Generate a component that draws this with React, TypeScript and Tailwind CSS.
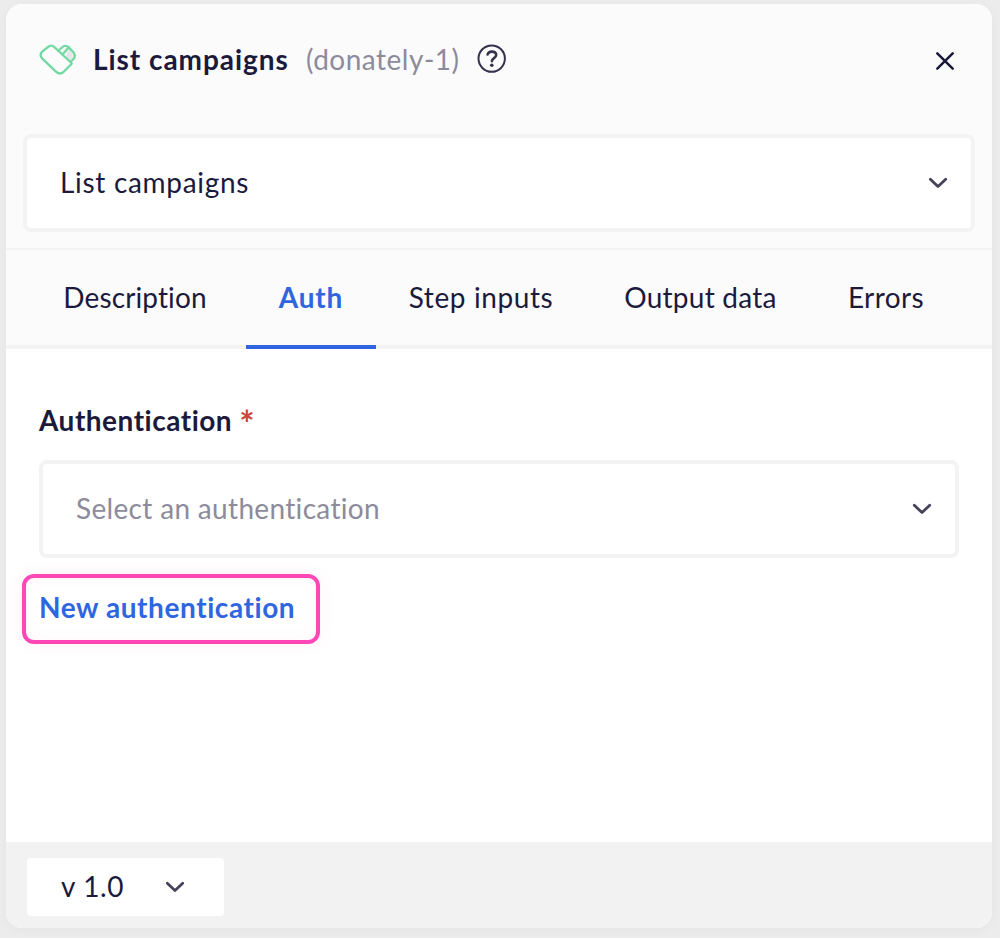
import React, { useState } from 'react';
import clsx from 'clsx';

interface TabItem {
  id: string;
  label: string;
  className: string;
}

const tabs: TabItem[] = [
  { id: 'description', label: 'Description', className: 'ml-[22px] w-[214px] tracking-[0.12px]' },
  { id: 'auth', label: 'Auth', className: 'mx-[4px] w-[130px] tracking-[0.8px]' },
  { id: 'inputs', label: 'Step inputs', className: 'w-[202px] tracking-[0.6px]' },
  { id: 'output', label: 'Output data', className: 'ml-[18px] w-[201px] tracking-[0.25px]' },
  { id: 'errors', label: 'Errors', className: 'ml-[15px] w-[140px] tracking-[0.4px]' },
];

const Chevron: React.FC<{ className?: string }> = ({ className }) => (
  <svg className={className} width="20" height="12" viewBox="0 0 20 12" fill="none" stroke="#454259" strokeWidth="2.8" strokeLinecap="round" strokeLinejoin="round">
    <path d="M2.3 2.3 10 9.6 17.7 2.3" />
  </svg>
);

const DonatelyLogo = () => (
  <svg width="38" height="34" viewBox="0 0 38 34" fill="none" strokeLinecap="round" strokeLinejoin="round">
    <path d="m26.5 15.5 2.5-9.5 5.5 6.5-2 7Z" fill="#e6e8e8" />
    <g stroke="#72d9a2" strokeWidth="2.3">
      <path d="m19.500 8.800 3.300-3.300c2.300-2 5-2 7.200.1l4.200 4.400c2.100 2.300 2.100 4.700.3 7L32 19.500" />
      <path d="m23.500 12.500 6-7" />
      <path d="M9 5c2-1.700 4.400-1.700 6.400.1l16.500 15.400.8 1.200-8 8.100c-2.600 2.300-5.300 2.200-7.700-.1L3.300 16.600c-2.200-2.300-2.200-4.700-.1-7Z" />
    </g>
  </svg>
);

const App: React.FC = () => {
  const [activeTab, setActiveTab] = useState('auth');

  return (
    <div className="h-[939px] w-[1000px] overflow-hidden border-b border-white bg-[#ececec] pt-1 pl-1.5 font-['Lato',sans-serif] text-[28px] leading-9 text-[#1b1a3c]">
      <div className="flex h-[924px] w-[986px] flex-col overflow-hidden rounded-2xl bg-white shadow-[0_2px_12px_rgba(0,0,0,0.035)]">
        {/* Header */}
        <div className="h-[246px] border-b-2 border-[#f3f3f3] bg-[#fbfbfb] px-[17px]">
          <div className="flex h-[130px] items-start pt-[38px] pl-4">
            <DonatelyLogo />
            <h1 className="-mt-px ml-4 w-[197px] font-bold tracking-[0.95px] whitespace-nowrap">List campaigns</h1>
            <span className="-mt-px ml-[16px] w-[156px] tracking-[0.5px] whitespace-nowrap text-[#8d8b9b]">(donately-1)</span>
            <button className="mt-[2px] ml-[15px]" aria-label="Help">
              <svg width="30" height="30" viewBox="0 0 30 30" fill="none" stroke="#35324e" strokeWidth="2" strokeLinecap="round">
                <circle cx="14.7" cy="14.6" r="13.2" />
                <path d="M10.600 10.500c.6-2 2-2.900 4.100-2.900 2.700 0 4.500 1.300 4.500 3.500 0 3-4.300 3-4.300 6" strokeWidth="2.6" />
                <circle cx="14.8" cy="21.3" r="1.8" fill="#35324e" stroke="none" />
              </svg>
            </button>
            <button className="mt-[9px] mr-5 ml-auto" aria-label="Close">
              <svg width="20" height="20" viewBox="0 0 20 20" stroke="#1b1a3c" strokeWidth="2.5" strokeLinecap="round">
                <path d="m2.300 2.300 15.400 15.400M17.700 2.300 2.300 17.700" />
              </svg>
            </button>
          </div>
          <button className="flex h-[98px] w-[952px] items-center justify-between rounded-lg border-4 border-[#f3f3f3] bg-white pr-[23px] pl-[33px]">
            <span className="pb-0.5 tracking-[0.7px]">List campaigns</span>
            <Chevron />
          </button>
        </div>

        {/* Tabs */}
        <div className="flex h-[99px] shrink-0 bg-[#fbfbfb] shadow-[inset_0_-4px_0_#f3f3f3]">
          {tabs.map((tab) => (
            <button
              key={tab.id}
              onClick={() => setActiveTab(tab.id)}
              className={clsx(
                'h-full border-b-4 pb-[2px] whitespace-nowrap',
                tab.className,
                activeTab === tab.id ? 'border-[#2f66df] font-bold text-[#2f66df]' : 'border-transparent'
              )}
            >
              {tab.label}
            </button>
          ))}
        </div>

        {/* Authentication */}
        <div className="flex-1 pt-[53px]">
          <label className="flex h-9 pl-[33px] font-bold tracking-[0.5px]">
            Authentication
            <span className="ml-[7px] text-[36px] leading-[42px] text-[#c9473f]">*</span>
          </label>
          <button className="mt-[22px] ml-[33px] flex h-[98px] w-[920px] items-center justify-between rounded-lg border-4 border-[#f3f3f3] pr-[23px] pl-[33px]">
            <span className="pb-0.5 tracking-[0.33px] text-[#8d8b9b]">Select an authentication</span>
            <Chevron />
          </button>
          <button className="mt-4 ml-4 flex h-[70px] w-[298px] items-center rounded-xl border-4 border-[#ff48b6] pb-1 pl-[13px] font-bold tracking-[0.58px] whitespace-nowrap text-[#2f66df] shadow-[0_0_16px_rgba(255,72,182,0.08),inset_0_0_14px_rgba(255,72,182,0.05)]">
            New authentication
          </button>
        </div>

        {/* Version */}
        <div className="h-[86px] bg-[#f2f2f2] pt-4 pl-[21px]">
          <button className="flex h-[58px] w-[197px] items-center justify-between rounded bg-white pr-[39px] pl-[34px]">
            <span className="pb-0.5 tracking-[0.6px]">v 1.0</span>
            <Chevron />
          </button>
        </div>
      </div>
    </div>
  );
};

export default App;
